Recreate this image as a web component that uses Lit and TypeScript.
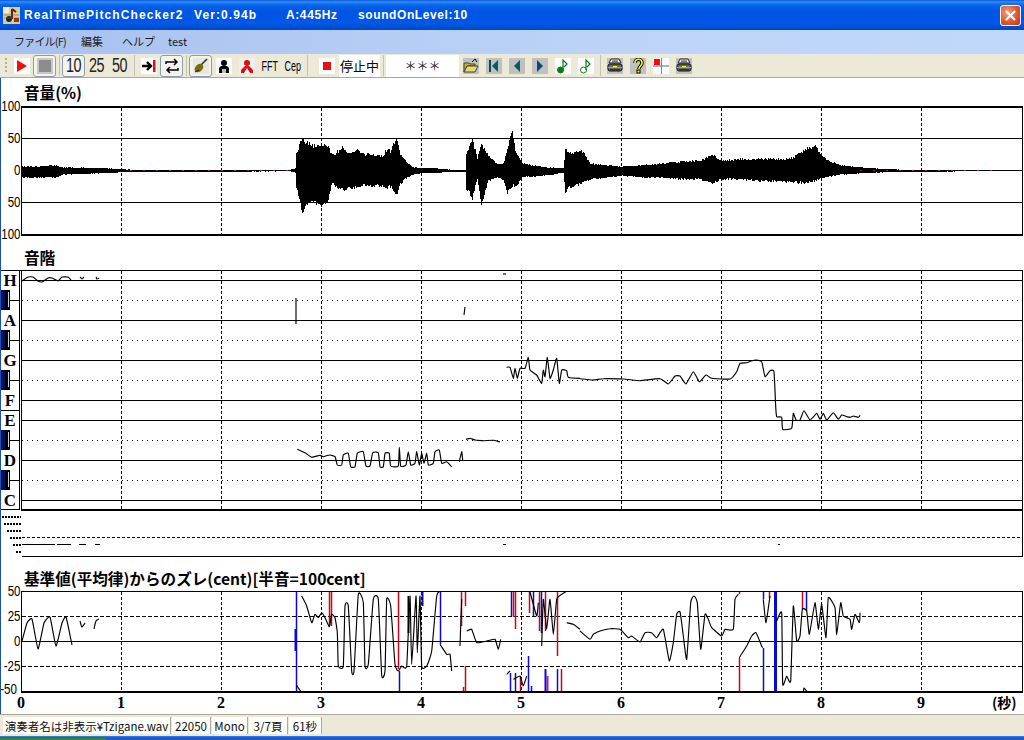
import { LitElement, html, css, svg } from "lit";
import { customElement } from "lit/decorators.js";

type P = number[];
// smooth polyline through the traced points (low-tension Catmull-Rom)
const smooth = (pts: number[][]) => {
  let s = `M${pts[0][0].toFixed(1)} ${pts[0][1].toFixed(1)}`;
  const t = 0.07;
  for (let i = 0; i < pts.length - 1; i++) {
    const p0 = pts[Math.max(0, i - 1)], p1 = pts[i], p2 = pts[i + 1], p3 = pts[Math.min(pts.length - 1, i + 2)];
    s += `C${(p1[0] + (p2[0] - p0[0]) * t).toFixed(1)} ${(p1[1] + (p2[1] - p0[1]) * t).toFixed(1)} ${(p2[0] - (p3[0] - p1[0]) * t).toFixed(1)} ${(p2[1] - (p3[1] - p1[1]) * t).toFixed(1)} ${p2[0].toFixed(1)} ${p2[1].toFixed(1)}`;
  }
  return s;
};
const conv = (x0: number, y0: number, a: P) => {
  const pts: number[][] = [];
  for (let i = 0; i < a.length; i += 2) pts.push([x0 + a[i] / 3, y0 + a[i + 1] / 3]);
  return smooth(pts);
};
const abs = (a: P) => conv(0, 0, a.map((v) => v * 3));
const VX = [121, 221, 321, 421, 521, 621, 721, 821, 921];

const ENV: P[] = [[21,166,178],[55,165,178],[62,167,175],[85,167.5,174],[105,168,173.5],[118,169,172.5],[130,169.5,172],[290,169.5,171.5],[295,168,173],[296,152,190],[302,135,215],[305,140,207],[313,144,203],[320,142,208],[328,145,203],[332,153,183],[335,152,188],[342,145,192],[348,153,190],[358,148,188],[363,153,187],[372,153,187],[382,155,187],[387,147,190],[390,150,188],[396,135,198],[400,153,185],[407,162,178],[413,167,175],[423,168,173],[433,168,173],[457,170,172],[465,170,172],[466,153,190],[472,137,200],[477,157,180],[481,142,207],[488,155,182],[497,163,178],[503,163,180],[507,147,195],[512,127,187],[515,150,188],[522,162,178],[533,165,177],[547,167,176],[563,168,173],[565,148,193],[572,152,187],[577,149,187],[582,150,185],[590,163,180],[610,165,178],[620,166,176],[640,165,178],[660,163,178],[680,161,180],[700,160,180],[712,153,185],[720,160,180],[740,158,180],[760,158,182],[790,158,183],[805,148,185],[815,145,182],[825,158,178],[840,165,175],[870,168,173],[900,169.5,172],[1021,170,171]];

function wave() {
  let seed = 12345;
  const rnd = () => ((seed = (seed * 16807) % 2147483647) / 2147483647);
  let d = "";
  let k = 0;
  for (let x = 22; x < 1022; x++) {
    while (k < ENV.length - 2 && ENV[k + 1][0] <= x) k++;
    const [a, t0, b0] = ENV[k];
    const [c, t1, b1] = ENV[k + 1];
    const f = Math.min(1, (x - a) / (c - a));
    const top = t1 * f + t0 * (1 - f);
    const bot = b1 * f + b0 * (1 - f);
    const j = Math.min(4, (bot - top) * 0.09);
    d += `M${x + 0.5} ${Math.round(top + rnd() * j)}V${Math.round(bot - rnd() * j)}`;
  }
  return d;
}

const PITCH: string[] = [
  abs([22,281,28,277,33,277,38,281,42,282,48,278,52,278,58,281,62,277,68,277,71,280]),
  abs([80,277,82,279,84,277]), abs([96,277,97,279,99,278]),
  abs([296,298,296,324]), abs([464,315,465,307]), abs([503,274,506,274]),
  conv(280,350,[52,298,75,308,95,322,120,316,130,320,150,315,165,320,172,345,185,345,190,315,205,310,212,350,225,350,232,310,250,305,258,348,270,348,278,308,295,308,300,350,310,350,315,310,328,310,332,348,355,348,358,292,362,348,378,345,385,305,392,345,405,340,410,305,418,345,425,310,432,340,440,310,445,345,460,340,465,305,478,300,485,340,500,335,515,350]),
  conv(280,350,[538,335,545,305,548,330]),
  conv(280,350,[558,268,570,265,585,270,610,272,640,271,660,276]),
  conv(280,350,[680,52,690,52,700,85,705,55,712,85,720,55,735,55,745,22,750,60,770,75,785,100,790,60,795,80,802,22,810,85,820,60,830,25,838,100,845,60,860,62,865,82,900,85]),
  conv(580,340,[0,116,40,120,70,116,130,117,180,122,240,116,265,132,285,108,300,108,318,132,340,95,358,125,378,105,395,115,450,117,470,95,480,70,500,68,525,60,545,65,555,110,570,92,582,95,587,200,590,230,605,232,608,268,635,265,640,220,648,240,660,240,672,212,690,240,710,220,720,238,730,220,740,240,760,218,775,238,785,225,800,230,810,232,820,228,835,232,840,226]),
];

const DEV: string[] = [
  abs([22,640,27,622,32,618,38,648,44,622,50,616,56,645,62,622,66,616,72,644]),
  abs([80,620,82,626,85,622]), abs([94,628,96,620,99,618]),
  conv(280,585,[65,30,80,60,95,110,105,85,115,95,125,80,135,95,148,122,155,85,165,95,172,140,175,240,190,240,195,60,205,60,215,255,222,255,235,25,250,50,255,240,265,235,280,40,295,40,305,268,315,255,320,40,332,60,345,235,355,255,365,240,380,240,390,30,395,235,408,30,412,200,420,30,425,240,440,240,455,195,470,30,480,16]),
  conv(280,585,[480,175,500,205,510,205,515,255]),
  conv(280,585,[540,180,545,40]),
  conv(280,585,[560,135,575,130,590,170,620,165,645,160,655,190,662,160]),
  conv(280,585,[680,265,690,255]),
  conv(280,585,[700,280,720,270,730,300,740,270]),
  conv(280,585,[750,18,770,90,775,50]),
  conv(280,585,[785,180,790,40,800,130,810,40,820,145,830,40,845,25,860,16]),
  conv(280,585,[860,110,880,115,900,130]),
  conv(280,585,[50,298,62,316]),
  conv(580,585,[0,135,30,160,40,145,60,135,90,128,120,130,145,155,155,150,180,168,195,140,215,140,230,155,250,130,268,225,280,170,290,85,300,78,310,150,320,220,332,50,342,30,352,50,362,190,375,85,385,100,395,125,425,150,435,130,460,130,465,40,475,25]),
  conv(580,585,[478,215,500,180,515,150,528,140,545,180,548,185]),
  conv(580,585,[550,40,558,110,570,30]),
  conv(580,585,[588,110,605,80,608,295,620,270,632,285,640,60,650,165,660,150,667,70,680,75,688,145,705,50,715,130,725,55,738,155,745,35,765,65,770,145,782,50,790,90,810,100,815,130,825,85,838,110,840,80]),
  conv(580,585,[670,316,672,305,680,316]),
];

const BL = "#0808d8", RD = "#d00020";
const VBARS: [number, number, number, string, number][] = [
  [296,590,690,BL,1.5],[295,628,650,BL,2],[329,590,625,RD,1.5],[331,590,625,RD,1.5],[398,590,668,RD,1.5],[399,670,690,BL,1.5],[408,595,632,"#000",2],[422,590,605,BL,2],[440,590,643,BL,1.5],[461,590,625,RD,1.5],[465,590,605,RD,1.5],[465,665,690,RD,1.5],[463,686,690,RD,1.5],
  [511,590,615,BL,1.5],[513,590,616,RD,1.5],[515,590,628,RD,1.5],[510,672,690,BL,1.5],[515,672,690,BL,1.5],[520,675,690,RD,1.5],[529,590,612,RD,1.5],[533,590,615,BL,1.5],[528,655,690,BL,1.5],[531,685,690,BL,1.5],[539,590,630,RD,1.5],[541,590,632,BL,1.5],[545,590,630,RD,1.5],[545,668,690,BL,2],[547,675,690,"#a020a0",2],[557,590,655,RD,1.5],[557,668,690,BL,1.5],[561,668,690,RD,1.5],
  [739,590,593,RD,1.5],[739,657,690,RD,1.5],[763,590,598,BL,1.5],[763,647,690,BL,1.5],[769,590,597,RD,1.5],[775,590,690,BL,3],[802,590,608,RD,1.5],[806,590,610,BL,1.5],
];

const ROOT_CSS = css`
  :host { display: block; width: 1024px; height: 740px; overflow: hidden; background: #fff; font-family: "Noto Sans CJK JP", "Liberation Sans", sans-serif; }
  .win { display: flex; flex-direction: column; height: 740px; }
  .titlebar { height: 30px; flex: none; display: flex; align-items: center; padding: 0 3px 0 3px; color: #fff; font: bold 12px "Liberation Sans", sans-serif; letter-spacing: 1.1px; white-space: nowrap;
    background: linear-gradient(#0a55d8 0, #2f8cf5 6%, #1573f0 12%, #0260e8 20%, #0055e2 40%, #0055e6 60%, #0058ea 78%, #004fd0 90%, #0047bc 100%); }
  .ticon { width: 17px; height: 17px; margin-right: 4px; flex: none; }
  .titlebar span { flex: none; }
  .t1 { width: 170px; } .t2 { width: 92px; } .t3 { width: 72px; letter-spacing: .6px; } .t4 { letter-spacing: .6px; }
  .close { margin-left: auto; width: 19px; height: 19px; border: 1px solid #fff; border-radius: 3px; background: radial-gradient(circle at 35% 35%, #f0a080, #e0572e 55%, #c8350f); display: flex; align-items: center; justify-content: center; }
  .menu { height: 24px; flex: none; display: flex; align-items: center; padding: 0 0 3px 14px; box-sizing: border-box; font-size: 11px; color: #1a1a1a; background: linear-gradient(90deg, #a8c0ee, #bdd4f8 60%, #c0d8fa); }
  .menu span { flex: none; }
  .m1 { width: 67px; letter-spacing: -0.8px; } .m2 { width: 41px; } .m3 { width: 46px; }
  .tool { height: 23px; flex: none; display: flex; align-items: center; padding-left: 10px; background: #ece9d8; border-bottom: 1px solid #aca899; position: relative; }
  .grip { position: absolute; left: 5px; top: 4px; width: 2px; height: 15px; background: repeating-linear-gradient(#b5b19c 0 2px, transparent 2px 4px); }
  .b { width: 23px; height: 22px; flex: none; display: flex; align-items: center; justify-content: center; box-sizing: border-box; font: 16px "Liberation Sans", sans-serif; color: #000; }
  .b svg { display: block; }
  .on { border: 1px solid #8f9bad; border-radius: 3px; background: #f4f3ec; }
  .num { font-size: 20px; color: #222; }
  .num span { display: block; transform: scaleX(.72); letter-spacing: -0.5px; }
  .small { font-size: 15px; }
  .small span { display: block; transform: scaleX(.6); white-space: nowrap; }
  .sep { width: 6px; height: 21px; flex: none; display: flex; justify-content: center; }
  .sep::after { content: ""; width: 1px; background: #c5c2b2; }
  .gap5 { margin-left: 5px; }
  .stat { width: 41px; height: 22px; flex: none; margin-left: 1px; background: #fff; font-size: 13px; display: flex; align-items: center; justify-content: center; color: #000; white-space: nowrap; }
  .stars { width: 73px; height: 22px; flex: none; background: #fff; font-size: 12px; display: flex; align-items: center; justify-content: center; color: #222; }
  .main { flex: none; height: 636px; background: #fff; border-left: 1px solid #1a50b8; display: flex; flex-direction: column; overflow: hidden; }
  .h { flex: none; padding-left: 23px; font-weight: 700; font-size: 15.6px; line-height: 20px; color: #000; white-space: nowrap; display: flex; align-items: flex-end; box-sizing: content-box; }
  .h1 { height: 24px; padding-bottom: 3px; }
  .h2 { height: 31px; padding-bottom: 3px; }
  .h3 { height: 30px; padding-bottom: 2px; }
  svg.plot { display: block; flex: none; overflow: visible; }
  .lab { font: 14px "Liberation Sans", sans-serif; fill: #000; }
  .key { font: bold 17px "Liberation Serif", serif; fill: #000; }
  .ax { font: bold 16px "Liberation Serif", serif; fill: #000; }
  .sec { font: bold 14px "Noto Sans CJK JP", sans-serif; fill: #000; }
  .crisp { shape-rendering: crispEdges; }
  .status { height: 22px; flex: none; display: flex; background: #ece9d8; border-top: 1px solid #aca899; box-sizing: border-box; font-size: 11.5px; color: #111; padding-left: 3px; padding-top: 2px; }
  .status span { flex: none; height: 17px; background: #fdfdfa; border-right: 1px solid #aca899; margin-right: 1px; display: flex; align-items: center; justify-content: center; white-space: nowrap; }
  .s1 { width: 167px; } .s2 { width: 38px; } .s3 { width: 35px; } .s4 { width: 38px; } .s5 { width: 32px; }
  .taskbar { flex: 1; background: #1d5ad0; border-top: 1px solid #3a78e0; }
  .start { height: 2px; width: 106px; background: #2f8a3a; margin-top: 1px; }
`;

const ic = (c: unknown, bg = "#c0c0c0") => html`<svg width="16" height="16" viewBox="0 0 16 16"><rect width="16" height="16" fill="${bg}"/>${c}</svg>`;
const printer = svg`<path d="M4 1h8l2 4H2z" fill="#eee" stroke="#222"/><path d="M5 3h6M5 4h6" stroke="#555"/><rect x="1" y="6" width="14" height="7" rx="2" fill="#666" stroke="#111"/><rect x="1" y="9" width="14" height="1" fill="#aaa"/><rect x="6" y="8" width="4" height="1" fill="#ff0"/><rect x="3" y="11" width="10" height="2" fill="#333"/>`;

@customElement("app-root")
export class AppRoot extends LitElement {
  static styles = ROOT_CSS;

  grid(y0: number, y1: number) {
    return VX.map((x) => svg`<line class="crisp" x1="${x + 0.5}" x2="${x + 0.5}" y1="${y0}" y2="${y1}" stroke="#000" stroke-dasharray="3 2"/>`);
  }
  hline(y: number, dash = "", x1 = 22) {
    return svg`<line class="crisp" x1="${x1}" x2="1023" y1="${y + 0.5}" y2="${y + 0.5}" stroke="#000" stroke-dasharray="${dash}"/>`;
  }
  label(t: string, y: number, x = 20.5) {
    const n = t.replace("-", "").length * 6.4 + (t.startsWith("-") ? 4 : 0);
    return svg`<text class="lab" x="${x}" y="${y + 5}" text-anchor="end" textLength="${n}" lengthAdjust="spacingAndGlyphs">${t}</text>`;
  }

  plot1() {
    return svg`
      ${[138, 170, 202].map((y) => this.hline(y))}
      ${this.grid(108, 234)}
      <path class="crisp" d="${wave()}" stroke="#000" fill="none"/>
      <path class="crisp" d="M130 170.5H295M860 170.5H1000" stroke="#a02040" stroke-dasharray="2 11" fill="none"/>
      <path class="crisp" d="M21 107H1023M21 235H1023" stroke="#000" stroke-width="2" fill="none"/>
      <path class="crisp" d="M21.5 106V236M1022.5 106V236" stroke="#000" fill="none"/>
      ${[["100", 106], ["50", 138], ["0", 170], ["50", 202], ["100", 234]].map(([t, y]) => this.label(t as string, y as number))}
    `;
  }

  plot2() {
    const solid = [280, 320, 360, 400, 420, 460, 500];
    const dot = [300, 340, 380, 440, 480];
    const stairs = [[2, 516], [4, 523], [7, 530], [10, 537], [13, 544], [16, 551]];
    return svg`
      ${solid.map((y) => this.hline(y))}
      ${dot.map((y) => this.hline(y, "1 4"))}
      ${this.grid(271, 509)}
      ${PITCH.map((d) => svg`<path d="${d}" fill="none" stroke="#000" stroke-width="1.15"/>`)}
      <path class="crisp" d="M1 270.5H1023M19.5 270V510M21.5 270V510M1022.5 270V510M1 509.5H20" stroke="#000" fill="none"/>
      <path class="crisp" d="M21 510H1023" stroke="#000" stroke-width="2" fill="none"/>
      ${dot.map((y) => svg`<rect class="crisp" x="1" y="${y - 10}" width="9" height="20" fill="#000"/><rect class="crisp" x="1" y="${y - 10}" width="4" height="20" fill="#001058"/><line class="crisp" x1="8.5" x2="8.5" y1="${y - 8}" y2="${y + 7}" stroke="#d0d0d8"/><line class="crisp" x1="10" x2="19" y1="${y + 0.5}" y2="${y + 0.5}" stroke="#000"/>`)}
      <line class="crisp" x1="1" x2="19" y1="410.5" y2="410.5" stroke="#000"/>
      ${[["H", 280], ["A", 320], ["G", 360], ["F", 400], ["E", 420], ["D", 460], ["C", 500]].map(([t, y]) => svg`<text class="key" x="10" y="${(y as number) + 6}" text-anchor="middle">${t}</text>`)}
      ${stairs.map(([x, y]) => svg`<line class="crisp" x1="${x}" x2="21" y1="${y + 0.5}" y2="${y + 0.5}" stroke="#000" stroke-width="2" stroke-dasharray="2 1"/>`)}
      ${this.hline(537, "3 2")}
      <path class="crisp" d="M22 544.5H55M57 544.5H71M79 544.5H86M95 544.5H100M503 544.5H506M778 544.5H780" stroke="#000" fill="none"/>
      ${this.hline(556)}
      <line class="crisp" x1="1022.5" x2="1022.5" y1="510" y2="557" stroke="#000"/>
    `;
  }

  plot3() {
    return svg`
      ${this.hline(615, "4 2")}${this.hline(640)}${this.hline(665, "4 2")}
      ${this.grid(591, 689)}
      ${VBARS.map(([x, a, b, c, w]) => svg`<line x1="${x + 0.5}" x2="${x + 0.5}" y1="${a}" y2="${b}" stroke="${c}" stroke-width="${w}"/>`)}
      ${DEV.map((d) => svg`<path d="${d}" fill="none" stroke="#000" stroke-width="1.15"/>`)}
      <path class="crisp" d="M21 590.5H1023M21.5 590V691M1022.5 590V691" stroke="#000" fill="none"/>
      <path class="crisp" d="M21 691H1023" stroke="#000" stroke-width="2" fill="none"/>
      ${[["50", 590], ["25", 615], ["0", 640], ["-25", 665]].map(([t, y]) => this.label(t as string, y as number))}
      ${this.label("-50", 688, 17)}
      ${Array.from({ length: 10 }, (_, i) => svg`<text class="ax" x="${21 + i * 100}" y="707" text-anchor="middle">${i}</text>`)}
      <text class="sec" x="992" y="707">(秒)</text>
    `;
  }

  render() {
    const note = (o: boolean) => svg`<circle cx="5.5" cy="12" r="3" fill="${o ? "#fff" : "#0a7a1a"}" stroke="#0a7a1a"/><path d="M8 12V2l4 4-3 3" stroke="#0a7a1a" fill="none" stroke-width="1.2"/>`;
    return html`<div class="win">
      <div class="titlebar">
        <svg class="ticon" viewBox="0 0 17 17"><rect width="17" height="17" fill="#d8cf90"/><rect x="0" y="0" width="6" height="6" fill="#f0ecd0"/><path d="M9 2v10M9 2l4 3" stroke="#701818" stroke-width="2" fill="none"/><circle cx="6" cy="12" r="3" fill="#222"/><path d="M1 8h15M1 11h15" stroke="#666" stroke-width=".6"/><rect x="11" y="11" width="5" height="4" fill="#a03020"/></svg>
        <span class="t1">RealTimePitchChecker2</span><span class="t2">Ver:0.94b</span><span class="t3">A:445Hz</span><span class="t4">soundOnLevel:10</span>
        <div class="close"><svg width="13" height="13" viewBox="0 0 13 13"><path d="M2 2l9 9M11 2l-9 9" stroke="#fff" stroke-width="2.2"/></svg></div>
      </div>
      <div class="menu"><span class="m1">ファイル(F)</span><span class="m2">編集</span><span class="m3">ヘルプ</span><span>test</span></div>
      <div class="tool"><div class="grip"></div>
        <div class="b">${ic(svg`<path d="M3 2l10 6-10 6z" fill="#ee1010"/>`, "#fff")}</div>
        <div class="b on">${ic(svg`<rect x="2" y="2" width="12" height="12" fill="#8c8c8c"/>`, "#c8c8c8")}</div>
        <div class="sep"></div>
        <div class="b on num"><span>10</span></div><div class="b num"><span>25</span></div><div class="b num"><span>50</span></div>
        <div class="sep"></div>
        <div class="b">${ic(svg`<path d="M1 8h8M6 4l4 4-4 4" stroke="#000" stroke-width="2.4" fill="none"/><rect x="12" y="2" width="2.5" height="12" fill="#e01010"/>`, "#fff")}</div>
        <div class="b on">${ic(svg`<path d="M2 6V4h10M10 1l3 3-3 3M14 10v2H4M6 9l-3 3 3 3" stroke="#000" stroke-width="1.5" fill="none"/>`, "#f4f3ec")}</div>
        <div class="sep"></div>
        <div class="b on">${ic(svg`<path d="M14 1L7 8" stroke="#333" stroke-width="1.6"/><ellipse cx="6" cy="10" rx="3.5" ry="5" transform="rotate(45 6 10)" fill="#7a6a10"/><path d="M2 14l4-2" stroke="#222"/>`, "#e8e8e0")}</div>
        <div class="b">${ic(svg`<circle cx="8" cy="5" r="3" fill="#000"/><path d="M3 15v-5l2-2h6l2 2v5z" fill="#000"/><path d="M6 15V11h4v4z" fill="#bbb"/>`, "#fff")}</div>
        <div class="b">${ic(svg`<circle cx="8" cy="5" r="3" fill="#d81010"/><path d="M2 15v-3l4-4h4l4 4v3z" fill="#d81010"/><path d="M5 15l3-5 3 5z" fill="#fff"/>`, "#eee")}</div>
        <div class="b small"><span>FFT</span></div><div class="b small"><span>Cep</span></div>
        <div class="sep"></div>
        <div class="b gap5">${ic(svg`<rect x="4" y="4" width="8" height="8" fill="#e81010"/>`, "#fff")}</div>
        <div class="stat">停止中</div>
        <div class="sep"></div>
        <div class="stars">＊＊＊</div>
        <div class="b">${ic(svg`<path d="M1 5h5l1 1h5v2H4l-3 6z" fill="#c8b040" stroke="#443"/><path d="M4 8h11l-3 6H1z" fill="#e8d870" stroke="#443"/><path d="M9 4l3-3 2 3" stroke="#000" fill="none"/>`)}</div>
        <div class="b">${ic(svg`<rect x="3" y="2" width="2" height="12" fill="#0a4a50"/><path d="M12 2L6 8l6 6z" fill="#0a5a60"/>`)}</div>
        <div class="b">${ic(svg`<path d="M11 2L5 8l6 6z" fill="#0a5a60"/>`)}</div>
        <div class="b">${ic(svg`<path d="M5 2l6 6-6 6z" fill="#0a4a70"/>`)}</div>
        <div class="b">${ic(note(false), "#fff")}</div>
        <div class="b">${ic(note(true), "#fff")}</div>
        <div class="sep"></div>
        <div class="b">${ic(printer)}</div>
        <div class="b">${ic(svg`<path d="M5 5c0-5 7-5 7 0 0 3-3 3-3 6" stroke="#000" stroke-width="3.4" fill="none"/><path d="M5 5c0-5 7-5 7 0 0 3-3 3-3 6" stroke="#ff0" stroke-width="1.6" fill="none"/><rect x="7" y="12" width="3" height="3" fill="#ff0" stroke="#000"/>`)}</div>
        <div class="b">${ic(svg`<rect x="1" y="1" width="6" height="6" fill="#ee1010"/><rect x="0" y="7" width="16" height="2" fill="#b0b0b0"/><rect x="8" y="0" width="1" height="16" fill="#888"/>`, "#fff")}</div>
        <div class="b">${ic(printer)}</div>
      </div>
      <div class="main">
        <div class="h h1">音量(%)</div>
        <svg class="plot" width="1023" height="131" viewBox="1 105 1023 131">${this.plot1()}</svg>
        <div class="h h2">音階</div>
        <svg class="plot" width="1023" height="288" viewBox="1 270 1023 288">${this.plot2()}</svg>
        <div class="h h3">基準値(平均律)からのズレ(cent)[半音=100cent]</div>
        <svg class="plot" width="1023" height="124" viewBox="1 589 1023 124">${this.plot3()}</svg>
      </div>
      <div class="status"><span class="s1">演奏者名は非表示¥Tzigane.wav</span><span class="s2">22050</span><span class="s3">Mono</span><span class="s4">3/7頁</span><span class="s5">61秒</span></div>
      <div class="taskbar"><div class="start"></div></div>
    </div>`;
  }
}
